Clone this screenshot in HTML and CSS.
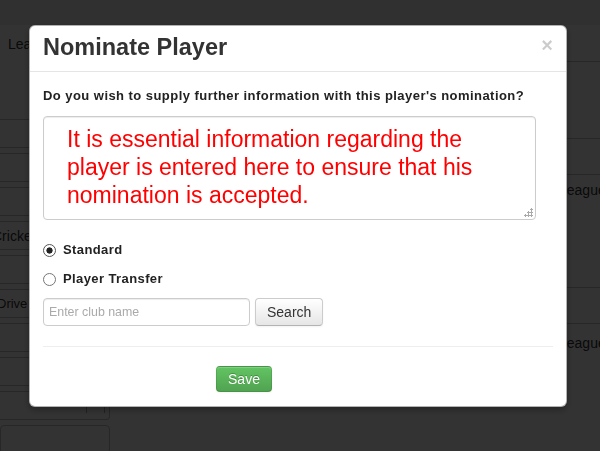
FILE: index.html
```html
<!DOCTYPE html>
<html lang="en">
<head>
<meta charset="utf-8">
<title>Nominate Player</title>
<link rel="stylesheet" href="styles.css">
</head>
<body>
<div class="page">
  <div class="topbar"></div>
  <div class="content">
    <aside class="side">
      <h4 class="side-title">League</h4>
      <div class="side-list">
        <div class="box"></div>
        <div class="box"></div>
        <div class="box"></div>
        <div class="box"><span class="cut">Cricket</span></div>
        <div class="box"></div>
        <div class="box small-text"><span class="cut-sm">Drive</span></div>
        <div class="box"></div>
        <div class="box"></div>
        <div class="box box-end"><span class="mini"></span></div>
        <div class="box box-last"></div>
      </div>
    </aside>
    <main class="table">
      <div class="row r1"><div></div><div class="cell"></div></div>
      <div class="row r2"><div></div><div class="cell"></div></div>
      <div class="row r3"><div></div><div class="cell"></div></div>
      <div class="row r4"><div></div><div class="cell">League</div></div>
      <div class="row r5"><div></div><div class="cell"></div></div>
      <div class="row r6"><div></div><div class="cell">League</div></div>
    </main>
  </div>
</div>
<div class="backdrop"></div>
<div class="modal">
  <div class="modal-header">
    <h3 class="modal-title">Nominate Player</h3>
    <span class="close">&times;</span>
  </div>
  <div class="modal-body">
    <p class="question">Do you wish to supply further information with this player's nomination?</p>
    <div class="ta-wrap">
      <textarea class="info">It is essential information regarding the player is entered here to ensure that his nomination is accepted.</textarea>
    </div>
    <label class="radio first"><input type="radio" name="kind" checked><span>Standard</span></label>
    <label class="radio"><input type="radio" name="kind"><span>Player Transfer</span></label>
    <div class="search-row">
      <input type="text" class="club" placeholder="Enter club name">
      <button class="btn">Search</button>
    </div>
    <div class="divider"></div>
    <div class="actions">
      <button class="btn btn-success">Save</button>
    </div>
  </div>
</div>
</body>
</html>
```

FILE: styles.css
```css
html, body {
  margin: 0;
  height: 451px;
  overflow: hidden;
}
body {
  font-family: "Liberation Sans", Arial, sans-serif;
  font-size: 14px;
  color: #333;
  background: #fff;
}

/* underlying page */
.topbar {
  height: 25px;
  background: #f0f0f0;
}
.content {
  display: grid;
  grid-template-columns: 110px 1fr;
}
.side {
  padding-top: 9px;
}
.side-title {
  margin: 0 0 65px 8px;
  font-size: 14px;
  font-weight: normal;
  line-height: 20px;
}
.side-list {
  display: flex;
  flex-direction: column;
  gap: 5px;
}
.box {
  box-sizing: border-box;
  height: 29px;
  border: 1px solid #c0c0c0;
  border-left: 0;
  border-radius: 0 4px 4px 0;
  display: flex;
  align-items: center;
  overflow: hidden;
  font-size: 14px;
}
.box-last {
  border-left: 1px solid #c0c0c0;
  border-radius: 4px;
}
.cut {
  flex: none;
  margin-left: -8px;
}
.small-text { font-size: 13px; }
.cut-sm {
  flex: none;
  margin-left: -3px;
}
.box-end {
  justify-content: flex-end;
  align-items: flex-end;
}
.mini {
  width: 17px;
  height: 15px;
  border: 1px solid #aaa;
  border-bottom: 0;
  margin: 0 4px 6px 0;
}
.table .row {
  display: grid;
  grid-template-columns: 1fr 49px;
  border-bottom: 1px solid #c0c0c0;
}
.cell {
  padding-left: 8px;
  white-space: nowrap;
  line-height: 20px;
}
.r1 { height: 36px; }
.r2 { height: 76px; }
.r3 { height: 35px; }
.r4 { height: 112px; }
.r4 .cell { padding-top: 5px; }
.r5 { height: 35px; }
.r6 { height: 120px; border-bottom: 0 !important; }
.r6 .cell { padding-top: 9px; }

.backdrop {
  position: fixed;
  inset: 0;
  background: rgba(0, 0, 0, 0.8);
}

/* modal */
.modal {
  position: fixed;
  left: 29px;
  top: 25px;
  width: 538px;
  box-sizing: border-box;
  background: #fff;
  border: 1px solid rgba(0, 0, 0, 0.3);
  border-radius: 6px;
  box-shadow: 0 3px 7px rgba(0, 0, 0, 0.3);
}
.modal-header {
  display: flex;
  justify-content: space-between;
  align-items: flex-start;
  padding: 6px 13px 9px;
  border-bottom: 1px solid #e5e5e5;
}
.modal-title {
  margin: 0;
  font-size: 23.5px;
  line-height: 30px;
  font-weight: bold;
  color: #333;
}
.close {
  margin-top: 3px;
  font-size: 20px;
  font-weight: bold;
  line-height: 20px;
  color: #000;
  opacity: 0.2;
}
.modal-body {
  padding: 15px 13px 14px;
}
.question {
  margin: 0;
  font-size: 13px;
  font-weight: bold;
  line-height: 18px;
  letter-spacing: 0.45px;
  color: #222;
}
.ta-wrap {
  position: relative;
  width: 493px;
  margin-top: 11px;
}
.info {
  display: block;
  box-sizing: border-box;
  width: 493px;
  height: 104px;
  margin: 0;
  padding: 8px 10px 4px 23px;
  border: 1px solid #ccc;
  border-radius: 4px;
  box-shadow: inset 0 1px 1px rgba(0, 0, 0, 0.075);
  font-family: "Liberation Sans", Arial, sans-serif;
  font-size: 23px;
  line-height: 28px;
  color: #f00;
  resize: none;
  overflow: hidden;
  outline: none;
}
.ta-wrap::after {
  content: "";
  position: absolute;
  right: 3px;
  bottom: 3px;
  width: 9px;
  height: 9px;
  background:
    radial-gradient(circle, #aaa 0 1px, transparent 1.3px) 6px 0 / 3px 3px no-repeat,
    radial-gradient(circle, #aaa 0 1px, transparent 1.3px) 3px 3px / 3px 3px no-repeat,
    radial-gradient(circle, #aaa 0 1px, transparent 1.3px) 6px 3px / 3px 3px no-repeat,
    radial-gradient(circle, #aaa 0 1px, transparent 1.3px) 0 6px / 3px 3px no-repeat,
    radial-gradient(circle, #aaa 0 1px, transparent 1.3px) 3px 6px / 3px 3px no-repeat,
    radial-gradient(circle, #aaa 0 1px, transparent 1.3px) 6px 6px / 3px 3px no-repeat;
}
.radio {
  display: flex;
  align-items: center;
  gap: 8px;
  margin-top: 11px;
  font-size: 13px;
  font-weight: bold;
  line-height: 18px;
  letter-spacing: 0.4px;
  color: #222;
}
.radio.first {
  margin-top: 21px;
}
.radio input {
  -webkit-appearance: none;
  appearance: none;
  box-sizing: border-box;
  width: 13px;
  height: 13px;
  margin: 0 -1px 0 0;
  border: 1px solid #767676;
  border-radius: 50%;
  background: #fff;
}
.radio input:checked {
  background: radial-gradient(circle, #222 0 2.8px, #fff 3.4px);
  border-color: #555;
}
.search-row {
  display: flex;
  gap: 5px;
  margin-top: 10px;
}
.club {
  box-sizing: border-box;
  width: 207px;
  height: 28px;
  margin: 0;
  padding: 4px 5px;
  border: 1px solid #ccc;
  border-radius: 4px;
  box-shadow: inset 0 1px 1px rgba(0, 0, 0, 0.075);
  font-family: "Liberation Sans", Arial, sans-serif;
  font-size: 12.4px;
  color: #555;
  outline: none;
}
.club::placeholder {
  color: #aaa;
}
.btn {
  box-sizing: border-box;
  height: 28px;
  margin: 0;
  padding: 0 11px;
  font-family: "Liberation Sans", Arial, sans-serif;
  font-size: 14px;
  line-height: 20px;
  color: #333;
  background: linear-gradient(to bottom, #ffffff, #e6e6e6);
  border: 1px solid #ccc;
  border-bottom-color: #b3b3b3;
  border-radius: 4px;
  box-shadow: inset 0 1px 0 rgba(255, 255, 255, 0.2), 0 1px 2px rgba(0, 0, 0, 0.05);
}
.divider {
  margin-top: 20px;
  border-top: 1px solid #eee;
}
.actions {
  display: flex;
  margin-top: 19px;
  padding-left: 173px;
}
.btn-success {
  height: 26px;
  width: 56px;
  padding: 0;
  color: #fff;
  text-shadow: 0 -1px 0 rgba(0, 0, 0, 0.25);
  background: linear-gradient(to bottom, #62c462, #51a351);
  border-color: rgba(0, 0, 0, 0.1) rgba(0, 0, 0, 0.1) rgba(0, 0, 0, 0.25);
}
```
